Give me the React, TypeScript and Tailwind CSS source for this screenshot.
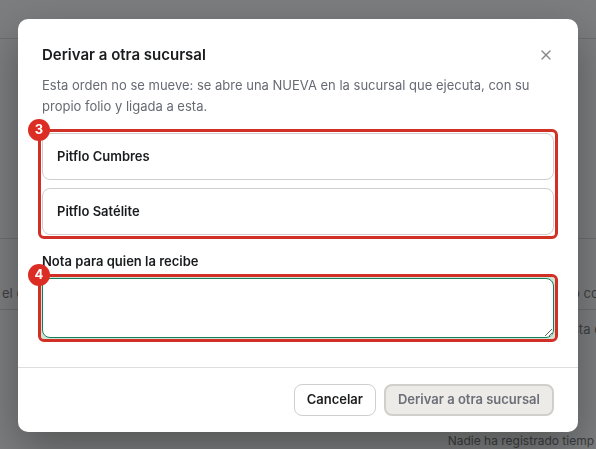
import { useState } from 'react';
import type { ReactNode } from 'react';
import { X } from 'lucide-react';

const branches = ['Pitflo Cumbres', 'Pitflo Satélite'];

const Highlight = ({ step, children }: { step: number; children: ReactNode }) => (
  <div className="relative">
    {children}
    <span className="pointer-events-none absolute -inset-1 rounded-md border-3 border-[#d03026]" />
    <span className="pointer-events-none absolute -top-3.5 -left-3.5 flex size-[22px] items-center justify-center rounded-full bg-[#db2d24] text-[13px] font-bold text-white">
      {step}
    </span>
  </div>
);

// Order page that stays visible around the dialog
const OrderPage = () => (
  <div aria-hidden="true" className="flex h-screen flex-col overflow-hidden bg-[#f8fbfd] text-[13px] whitespace-nowrap text-[#7c8287]">
    <div className="h-[39px] shrink-0 border-b border-[#d9dcde]" />
    <div className="h-[200px] shrink-0 border-b border-[#d9dcde]" />
    <div className="flex h-[71px] shrink-0 items-end justify-between border-b border-[#d9dcde] pb-1.5 pl-0.5">
      <span>el c</span>
      <span className="w-6">o co</span>
    </div>
    <div className="flex flex-1 flex-col items-end justify-between pt-2.5">
      <span className="w-6">sta e</span>
      <span className="pr-0.5 text-xs text-[#757a80]">Nadie ha registrado tiemp</span>
    </div>
  </div>
);

const TransferDialog = () => {
  const [selected, setSelected] = useState<string | null>(null);
  const [note, setNote] = useState('');

  return (
    <div
      role="dialog"
      aria-modal="true"
      aria-labelledby="dialog-title"
      className="w-full max-w-[560px] rounded-[10px] bg-white shadow-[0_16px_44px_rgba(0,0,0,0.32)]"
    >
      <div className="px-6 pt-6 pb-[29px]">
        <div className="flex items-center justify-between">
          <h2 id="dialog-title" className="text-[15px] leading-6 font-semibold text-[#191b1d]">
            Derivar a otra sucursal
          </h2>
          <button type="button" aria-label="Cerrar" className="text-[#85898c]">
            <X size={16} strokeWidth={2} />
          </button>
        </div>
        <p className="mt-2 text-[13px] leading-[21px] text-[#666b73]">
          Esta orden no se mueve: se abre una NUEVA en la sucursal que ejecuta, con su propio folio y ligada a esta.
        </p>

        <div className="mt-4">
          <Highlight step={3}>
            <div className="flex flex-col gap-2">
              {branches.map((branch) => (
                <button
                  key={branch}
                  type="button"
                  aria-pressed={selected === branch}
                  onClick={() => setSelected(branch)}
                  className="h-[47px] rounded-lg border border-[#cfcfcd] px-3.5 text-left text-[13px] font-semibold text-[#191b1d] aria-pressed:border-[#16805a]"
                >
                  {branch}
                </button>
              ))}
            </div>
          </Highlight>
        </div>

        <label htmlFor="note" className="mt-4 mb-1.5 block text-[13px] leading-[21px] font-semibold text-[#191b1d]">
          Nota para quien la recibe
        </label>
        <Highlight step={4}>
          <textarea
            id="note"
            value={note}
            onChange={(e) => setNote(e.target.value)}
            className="block h-[60px] w-full resize-y rounded-lg border border-[#16805a] bg-white px-3 py-2 text-[13px] ring-3 ring-[#cfe3d3] outline-none"
          />
        </Highlight>
      </div>

      <div className="flex justify-end gap-2 border-t border-[#dededd] px-6 py-4">
        <button type="button" className="h-8 rounded-lg border border-[#cfcfcd] px-3 text-[13px] font-semibold text-[#191b1d]">
          Cancelar
        </button>
        <button
          type="button"
          disabled={!selected}
          className="h-8 rounded-lg border-2 border-[#d0cfcc] bg-[#ecebe7] px-3 text-[13px] font-semibold text-[#6c6e78]"
        >
          Derivar a otra sucursal
        </button>
      </div>
    </div>
  );
};

const App = () => (
  <div className="font-[Inter,'Liberation_Sans',sans-serif]">
    <OrderPage />
    <div className="fixed inset-0 flex items-start justify-center bg-black/50 px-[18px] pt-[19px]">
      <TransferDialog />
    </div>
  </div>
);

export default App;
